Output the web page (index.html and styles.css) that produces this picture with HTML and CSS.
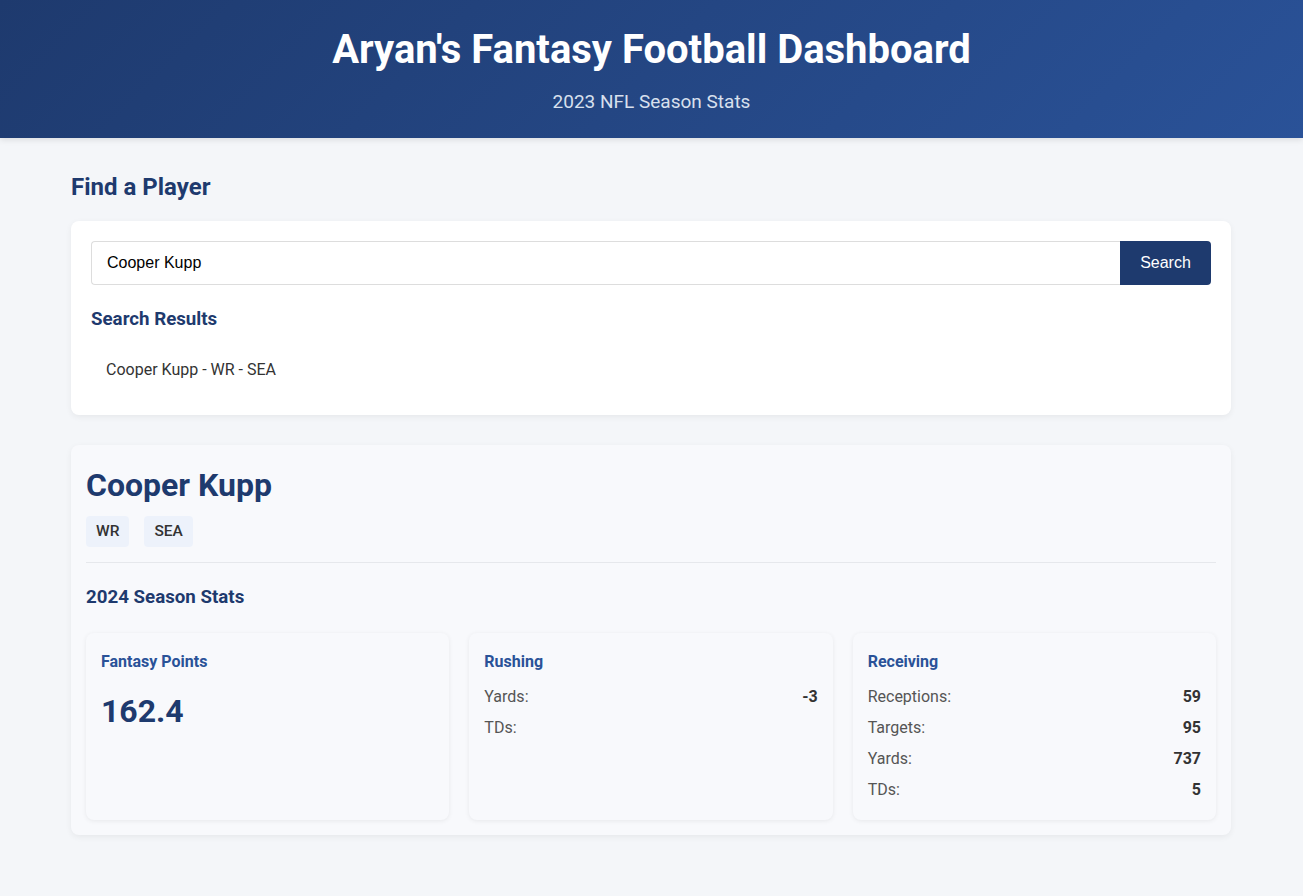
FILE: index.html
```html
<!DOCTYPE html>
<html lang="en">
<head>
<meta charset="utf-8">
<title>Aryan's Fantasy Football Dashboard</title>
<link rel="stylesheet" href="styles.css">
</head>
<body>
<header class="header">
  <h1 class="header-title">Aryan's Fantasy Football Dashboard</h1>
  <p class="header-sub">2023 NFL Season Stats</p>
</header>
<main class="container">
  <h2 class="section-title">Find a Player</h2>
  <section class="card search-card">
    <div class="search-row">
      <input class="search-input" type="text" value="Cooper Kupp">
      <button class="search-btn">Search</button>
    </div>
    <h3 class="results-title">Search Results</h3>
    <div class="result-item">Cooper Kupp - WR - SEA</div>
  </section>

  <section class="player-card">
    <h2 class="player-name">Cooper Kupp</h2>
    <div class="badges">
      <span class="badge">WR</span>
      <span class="badge">SEA</span>
    </div>
    <h3 class="stats-title">2024 Season Stats</h3>
    <div class="stats-grid">
      <div class="stat-card">
        <h4 class="stat-card-title">Fantasy Points</h4>
        <div class="big-number">162.4</div>
      </div>
      <div class="stat-card">
        <h4 class="stat-card-title">Rushing</h4>
        <div class="stat-row"><span class="stat-label">Yards:</span><span class="stat-value">-3</span></div>
        <div class="stat-row"><span class="stat-label">TDs:</span><span class="stat-value"></span></div>
      </div>
      <div class="stat-card">
        <h4 class="stat-card-title">Receiving</h4>
        <div class="stat-row"><span class="stat-label">Receptions:</span><span class="stat-value">59</span></div>
        <div class="stat-row"><span class="stat-label">Targets:</span><span class="stat-value">95</span></div>
        <div class="stat-row"><span class="stat-label">Yards:</span><span class="stat-value">737</span></div>
        <div class="stat-row"><span class="stat-label">TDs:</span><span class="stat-value">5</span></div>
      </div>
    </div>
  </section>
</main>
</body>
</html>
```
FILE: styles.css
```css
* { box-sizing: border-box; }
body {
  margin: 0;
  background: #f4f6f9;
  font-family: Roboto, "Liberation Sans", Arial, sans-serif;
  color: #333;
}
.header {
  background: linear-gradient(135deg, #1e3a6e 0%, #2a5298 100%);
  color: #fff;
  text-align: center;
  padding: 26px 20px 0;
  height: 138px;
  box-shadow: 0 2px 6px rgba(0,0,0,0.1);
}
.header-title {
  margin: 0;
  font-size: 40px;
  font-weight: 700;
  line-height: 48px;
}
.header-sub {
  margin: 16px 0 0;
  font-size: 19px;
  line-height: 24px;
  color: #d8e0ee;
}
.container {
  width: 1200px;
  margin-left: 51px;
  padding: 0 20px 60px;
}
.section-title {
  margin: 34px 0 19px;
  font-size: 24px;
  line-height: 30px;
  color: #1e3a6e;
  font-weight: 700;
}
.card {
  background: #fff;
  border-radius: 8px;
  box-shadow: 0 2px 6px rgba(0,0,0,0.06);
}
.search-card {
  padding: 20px;
}
.search-row {
  display: flex;
}
.search-input {
  flex: 1;
  height: 44px;
  border: 1px solid #ddd;
  border-right: none;
  border-radius: 4px 0 0 4px;
  padding: 0 15px;
  font-family: "Liberation Sans", Arial, sans-serif;
  font-size: 16px;
  color: #000;
  background: #fff;
  outline: none;
}
.search-btn {
  width: 91px;
  height: 44px;
  border: none;
  background: #1e3a6e;
  color: #fff;
  border-radius: 0 4px 4px 0;
  font-family: "Liberation Sans", Arial, sans-serif;
  font-size: 16px;
}
.results-title {
  margin: 22px 0 0;
  font-size: 18.72px;
  line-height: 24px;
  color: #1e3a6e;
  font-weight: 700;
}
.result-item {
  padding: 15px;
  margin-top: 14px;
  font-size: 16px;
  line-height: 20px;
  color: #333;
}
.player-card {
  margin-top: 30px;
  background: #f8f9fc;
  border-radius: 8px;
  box-shadow: 0 2px 6px rgba(0,0,0,0.06);
  padding: 20px 15px 15px;
}
.player-name {
  margin: 0;
  font-size: 32px;
  line-height: 40px;
  color: #1e3a6e;
  font-weight: 700;
}
.badges {
  display: flex;
  gap: 15px;
  margin-top: 11px;
  padding-bottom: 15px;
  border-bottom: 1px solid #e6e8ec;
}
.badge {
  background: #edf2fb;
  border-radius: 4px;
  padding: 0 10px;
  height: 31px;
  line-height: 31px;
  font-size: 15.5px;
  font-weight: 500;
  color: #333;
}
.stats-title {
  margin: 22px 0 0;
  font-size: 18.72px;
  line-height: 24px;
  color: #1e3a6e;
  font-weight: 700;
}
.stats-grid {
  margin-top: 24px;
  display: grid;
  grid-template-columns: repeat(3, 1fr);
  gap: 20px;
}
.stat-card {
  background: #f8f9fc;
  border-radius: 8px;
  box-shadow: 0 1px 5px rgba(0,0,0,0.07);
  padding: 19px 15px 15px;
  min-height: 187px;
}
.stat-card-title {
  margin: 0 0 9px;
  font-size: 16px;
  line-height: 20px;
  color: #2a5298;
  font-weight: 700;
}
.big-number {
  font-size: 32px;
  font-weight: 700;
  line-height: 44px;
  color: #1e3a6e;
  margin-top: 17px;
}
.stat-row {
  display: flex;
  justify-content: space-between;
  font-size: 16px;
  line-height: 31px;
}
.stat-label { color: #555; }
.stat-value { font-weight: 700; color: #333; }
```
